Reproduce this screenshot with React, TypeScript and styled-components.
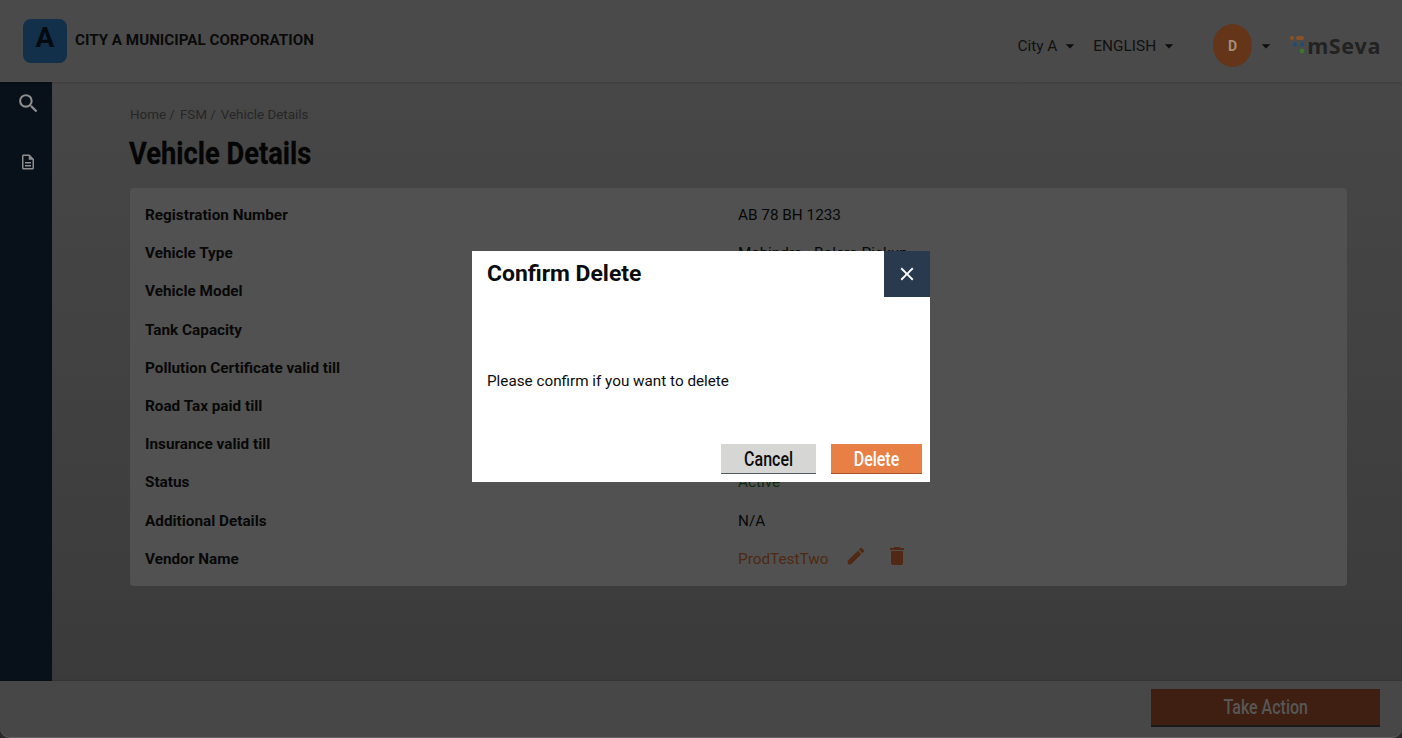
import React from "react";
import styled, { createGlobalStyle } from "styled-components";
import { MdSearch, MdOutlineDescription, MdEdit, MdDelete, MdClose, MdArrowDropDown } from "react-icons/md";

const Global = createGlobalStyle`
  html, body { margin: 0; padding: 0; height: 738px; overflow: hidden; background: #2a2a2a; }
  body { font-family: Roboto, "Liberation Sans", sans-serif; }
  * { box-sizing: border-box; }
`;

const Page = styled.div`
  width: 1402px;
  height: 738px;
  display: flex;
  flex-direction: column;
  background: #2a2a2a;
`;

const Header = styled.header`
  height: 82px;
  flex: none;
  display: flex;
  align-items: center;
  padding: 0 21px 0 23px;
  background: #4a4a4a;
  box-shadow: 0 1px 2px rgba(0, 0, 0, 0.15);
  z-index: 1;
`;

const CityLogo = styled.div`
  width: 44px;
  height: 44px;
  margin-top: -1px;
  border-radius: 8px;
  background: #123049;
  color: #050a10;
  display: flex;
  align-items: center;
  justify-content: center;
  font-size: 28px;
  font-weight: 700;
  padding-bottom: 6px;
`;

const CityName = styled.div`
  margin-left: 8px;
  margin-top: -3px;
  font-size: 15.2px;
  font-weight: 700;
  color: #0a0a0a;
  flex: 1;
`;

const HeaderRight = styled.div`
  display: flex;
  align-items: center;
  margin-top: 9px;
`;

const Picker = styled.div<{ $gap: number }>`
  display: flex;
  align-items: center;
  margin-right: ${(p) => p.$gap}px;
  font-size: 15.4px;
  color: #111;
  svg { margin-left: 3px; width: 20px; height: 20px; color: #0d0d0d; }
`;

const Avatar = styled.div`
  width: 39px;
  height: 43px;
  margin-right: 1px;
  border-radius: 50%;
  background: #643518;
  color: #a88c78;
  display: flex;
  align-items: center;
  justify-content: center;
  font-size: 14px;
  font-weight: 700;
`;

const BrandWrap = styled.div`
  display: flex;
  align-items: center;
  margin-left: 14px;
  color: #222;
  font-family: "Open Sans", sans-serif;
  font-size: 21.5px;
  font-weight: 700;
  letter-spacing: 0.6px;
  svg { margin-right: 2px; margin-top: -1px; }
`;

const Middle = styled.div`
  flex: 1;
  min-height: 0;
  display: flex;
`;

const Side = styled.nav`
  width: 52px;
  flex: none;
  background: #08101a;
  display: flex;
  flex-direction: column;
  align-items: center;
  padding: 9px 0 0 4px;
  gap: 37px;
  color: #8e8e8e;
`;

const Main = styled.main`
  flex: 1;
  padding: 24px 55px 0 78px;
  background: linear-gradient(180deg, #474747 0%, #3e3e3e 75%, #3a3a3a 100%);
`;

const Crumbs = styled.div`
  display: flex;
  gap: 5px;
  font-size: 13.4px;
  line-height: 18px;
  color: #262626;
`;

const Title = styled.h1`
  margin: 9px 0 15px -1px;
  font-size: 32px;
  line-height: 40px;
  font-weight: 700;
  color: #050505;
  -webkit-text-stroke: 0.3px #050505;
  transform: scaleX(0.853);
  transform-origin: left center;
  white-space: nowrap;
`;

const Card = styled.section`
  height: 398px;
  padding: 8px 15px;
  background: #515151;
  border-radius: 4px;
  display: flex;
  flex-direction: column;
`;

const Row = styled.div`
  height: 38.2px;
  flex: none;
  display: grid;
  grid-template-columns: 593px 1fr;
  align-items: center;
  font-size: 15.3px;
`;

const Label = styled.div`
  font-weight: 700;
  font-size: 15.3px;
  color: #080808;
`;

const Value = styled.div<{ $tone?: string }>`
  display: flex;
  align-items: center;
  color: ${(p) => p.$tone || "#080808"};
`;

const RowIcon = styled.span<{ $left: number }>`
  display: flex;
  margin-left: ${(p) => p.$left}px;
  margin-top: -5px;
  color: #502813;
`;

const Footer = styled.footer`
  height: 57px;
  flex: none;
  display: flex;
  justify-content: flex-end;
  padding: 8px 22px 0 0;
  background: #474747;
  border-bottom: 1px solid #636363;
  border-radius: 0 0 10px 10px;
  box-shadow: 0 -1px 1px rgba(0, 0, 0, 0.1);
`;

const ActionButton = styled.button`
  width: 229px;
  height: 38px;
  border: 0;
  border-bottom: 2px solid #1a1a1a;
  background: #3e1f11;
  color: #575757;
  font-family: inherit;
  font-size: 20px;
  font-weight: 500;
  span { display: inline-block; transform: scaleX(0.8); }
`;

const Backdrop = styled.div`
  position: fixed;
  inset: 0;
  display: flex;
  align-items: flex-start;
  justify-content: center;
  padding: 251px 0 0 0;
  z-index: 10;
`;

const Modal = styled.div`
  position: relative;
  width: 458px;
  height: 231px;
  background: #fff;
  display: flex;
  flex-direction: column;
`;

const ModalTitle = styled.h2`
  margin: 0;
  padding: 9px 15px 0;
  font-size: 22.9px;
  line-height: 28px;
  font-weight: 700;
  color: #0b0c0c;
`;

const CloseButton = styled.button`
  position: absolute;
  top: 0;
  right: 0;
  width: 46px;
  height: 46px;
  border: 0;
  padding: 0;
  background: #2a3a4e;
  color: #fff;
  display: flex;
  align-items: center;
  justify-content: center;
`;

const ModalBody = styled.p`
  margin: 0;
  flex: 1;
  display: flex;
  align-items: center;
  padding: 29px 15px 0;
  font-size: 15.25px;
  color: #0b0c0c;
`;

const ModalActions = styled.div`
  display: flex;
  justify-content: flex-end;
  gap: 15px;
  padding: 0 8px 8px;
`;

const ModalButton = styled.button<{ $primary?: boolean; $w: number }>`
  width: ${(p) => p.$w}px;
  height: 30px;
  border: 0;
  border-bottom: 1px solid ${(p) => (p.$primary ? "#a8552a" : "#505a5f")};
  padding: 0;
  background: ${(p) => (p.$primary ? "#e87f45" : "#d6d6d4")};
  color: ${(p) => (p.$primary ? "#fff" : "#0b0c0c")};
  font-family: inherit;
  font-size: 20px;
  font-weight: 500;
  span { display: inline-block; transform: scaleX(0.8); }
`;

const rows: { label: string; value?: string; tone?: string; vendor?: boolean }[] = [
  { label: "Registration Number", value: "AB 78 BH 1233" },
  { label: "Vehicle Type", value: "Mahindra - Bolero Pickup" },
  { label: "Vehicle Model" },
  { label: "Tank Capacity" },
  { label: "Pollution Certificate valid till" },
  { label: "Road Tax paid till" },
  { label: "Insurance valid till" },
  { label: "Status", value: "Active", tone: "#0c2a0e" },
  { label: "Additional Details", value: "N/A" },
  { label: "Vendor Name", value: "ProdTestTwo", tone: "#4e2914", vendor: true },
];

const BrandDots = () => (
  <svg width="15" height="18" viewBox="0 0 15 18">
    <rect x="0" y="0" width="4" height="4" rx="2" fill="#8a5226" />
    <rect x="6" y="0" width="8" height="4" rx="2" fill="#8a5226" />
    <circle cx="5" cy="8.5" r="2" fill="#1f4c74" />
    <circle cx="12" cy="8.5" r="2" fill="#1f4c74" />
    <circle cx="12" cy="15" r="2.4" fill="#3f7330" />
  </svg>
);

export default function App() {
  return (
    <Page>
      <Global />
      <Header>
        <CityLogo>A</CityLogo>
        <CityName>CITY A MUNICIPAL CORPORATION</CityName>
        <HeaderRight>
          <Picker $gap={13}>City A<MdArrowDropDown /></Picker>
          <Picker $gap={34}>ENGLISH<MdArrowDropDown /></Picker>
          <Avatar>D</Avatar>
          <Picker $gap={0}><MdArrowDropDown /></Picker>
          <BrandWrap><BrandDots />mSeva</BrandWrap>
        </HeaderRight>
      </Header>
      <Middle>
        <Side>
          <MdSearch size={25} />
          <MdOutlineDescription size={18} />
        </Side>
        <Main>
          <Crumbs><span>Home /</span><span>FSM /</span><span>Vehicle Details</span></Crumbs>
          <Title>Vehicle Details</Title>
          <Card>
            {rows.map((r) => (
              <Row key={r.label}>
                <Label>{r.label}</Label>
                <Value $tone={r.tone}>
                  {r.value}
                  {r.vendor && (
                    <>
                      <RowIcon $left={17}><MdEdit size={22} /></RowIcon>
                      <RowIcon $left={18}><MdDelete size={24} /></RowIcon>
                    </>
                  )}
                </Value>
              </Row>
            ))}
          </Card>
        </Main>
      </Middle>
      <Footer>
        <ActionButton><span>Take Action</span></ActionButton>
      </Footer>
      <Backdrop>
        <Modal>
          <ModalTitle>Confirm Delete</ModalTitle>
          <CloseButton aria-label="Close"><MdClose size={22} /></CloseButton>
          <ModalBody>Please confirm if you want to delete</ModalBody>
          <ModalActions>
            <ModalButton $w={95}><span>Cancel</span></ModalButton>
            <ModalButton $w={91} $primary><span>Delete</span></ModalButton>
          </ModalActions>
        </Modal>
      </Backdrop>
    </Page>
  );
}
